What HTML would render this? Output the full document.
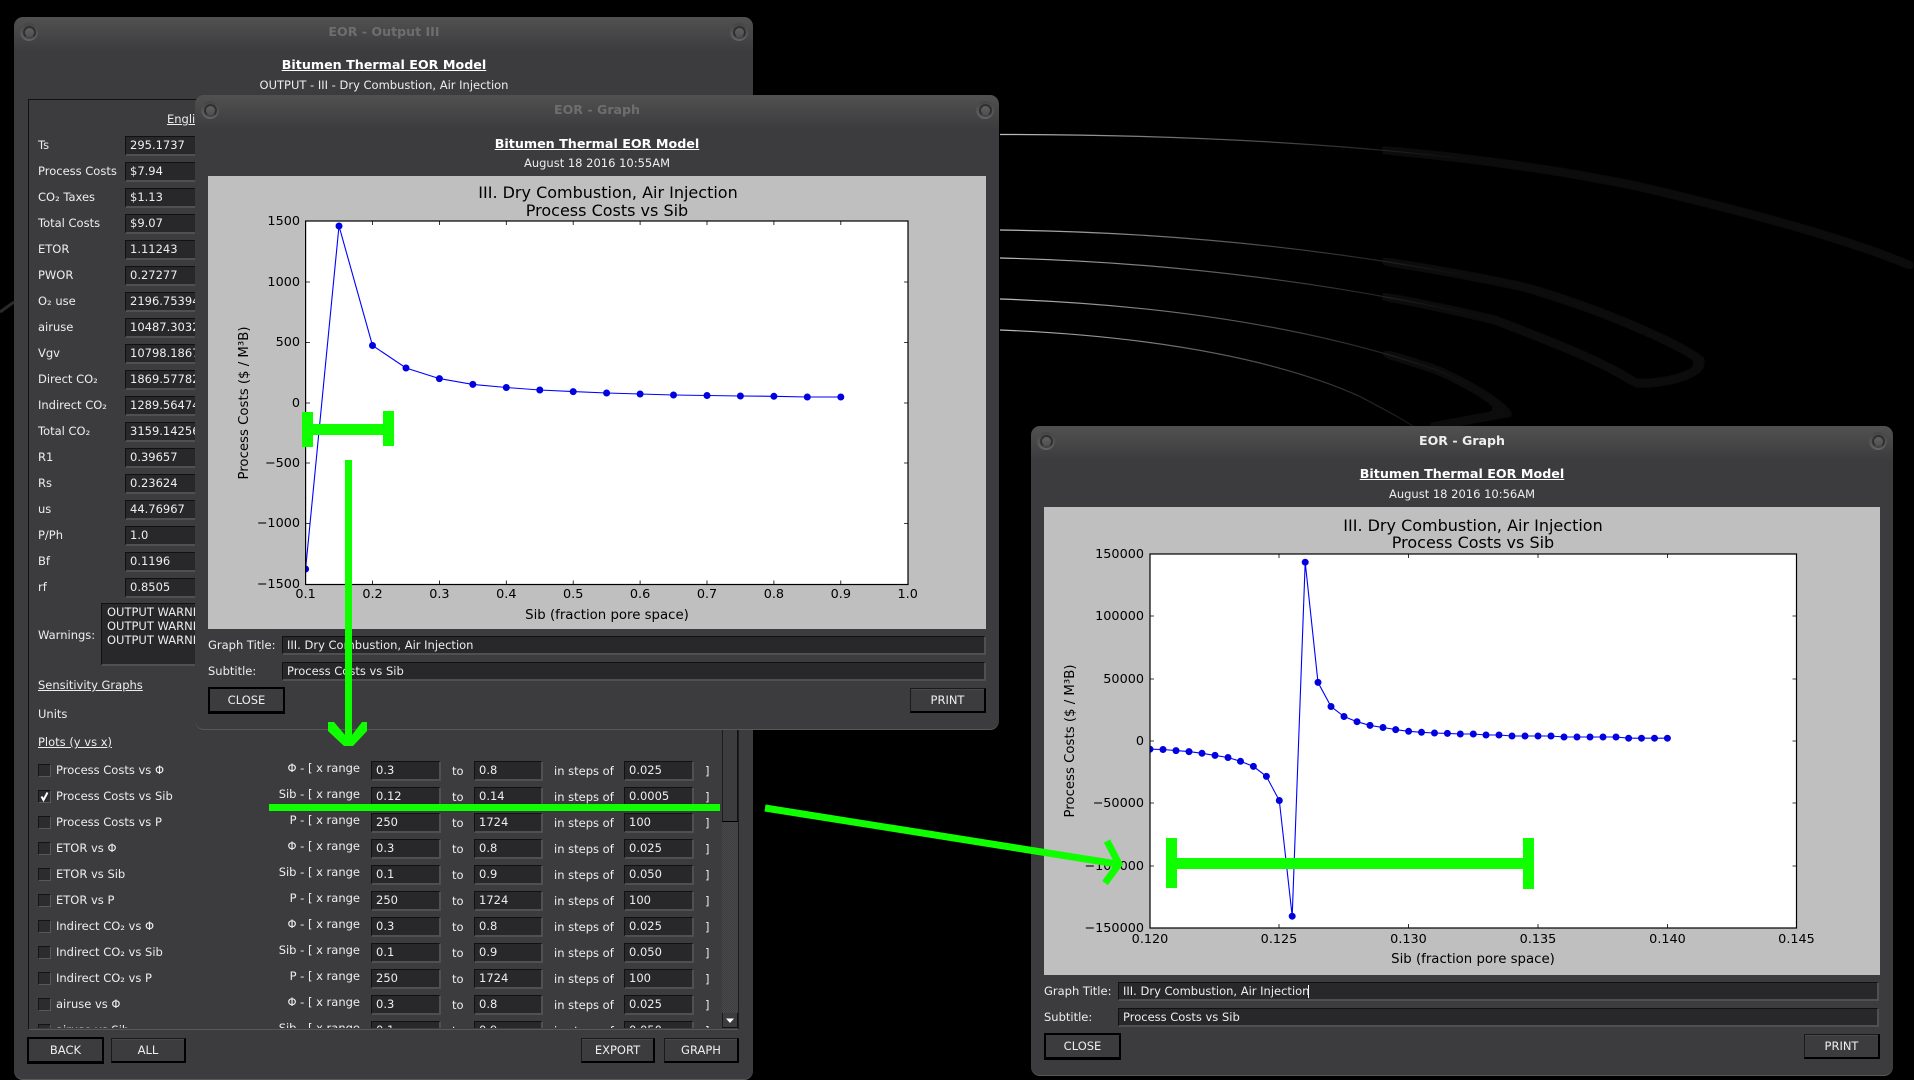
<!DOCTYPE html>
<html lang="en"><head><meta charset="utf-8"><title>EOR</title>
<style>
html,body{margin:0;padding:0;background:#000;width:1914px;height:1080px;overflow:hidden}
body{position:relative;font:11.5px/14px "DejaVu Sans","Liberation Sans",sans-serif;color:#eee}
div,span,svg{position:absolute}
svg{left:0;top:0}
.t{white-space:nowrap}
.w{box-sizing:border-box;background:linear-gradient(#515152 0,#3c3c3e 34px);border-radius:9px;border-bottom:1px solid #58585a}
.c{white-space:nowrap;text-align:center}
.h{font-weight:bold;font-size:12.6px;color:#6e6e6e}
.b{font-weight:bold;font-size:12.7px;text-decoration:underline;color:#fff}
.u{text-decoration:underline}
.k{width:18px;height:18px;border-radius:50%;background:linear-gradient(#444445,#626264)}
.k:after{content:"";position:absolute;left:2.5px;top:2.5px;width:9px;height:9px;border:2px solid #303031;border-bottom-color:#444445;border-radius:50%;background:linear-gradient(#606061,#505052)}
.i{box-sizing:border-box;height:20px;background:#28282a;border:1px solid #111;border-right:2px solid #505052;border-bottom:2px solid #505052;padding-left:4px;line-height:17px;overflow:hidden;white-space:nowrap}
.btn{box-sizing:border-box;text-align:center;background:#3c3c3e;border:1px solid #1a1a1a;border-right:2px solid #000;border-bottom:2px solid #000;box-shadow:inset 0 1px #48484a;line-height:22px;height:25px}
.d{border:2px solid #000;border-bottom:3px solid #000;line-height:22px;height:27px;box-shadow:none}
.x{box-sizing:border-box;width:13px;height:13px;left:38px;background:#2c2c2e;border:1px solid #141414;border-right:1px solid #58585a;border-bottom:1px solid #58585a}
.r{left:210px;width:150px;text-align:right;white-space:nowrap}
svg text{font-family:"DejaVu Sans","Liberation Sans",sans-serif;font-size:12.8px;fill:#000}
svg text.ft{font-size:16px;text-anchor:middle}
svg text.l{font-size:13.3px;text-anchor:middle}
.e{text-anchor:end}.m{text-anchor:middle}
</style></head><body>

<svg width="1914" height="1080" viewBox="0 0 1914 1080" fill="none">
<defs>
<linearGradient id="g1" gradientUnits="userSpaceOnUse" x1="1000" y1="0" x2="1480" y2="0"><stop offset="0" stop-color="#c0c0c0"/><stop offset=".4" stop-color="#666"/><stop offset=".8" stop-color="#222"/><stop offset="1" stop-color="#181818" stop-opacity="0"/></linearGradient>
<linearGradient id="g2" gradientUnits="userSpaceOnUse" x1="1250" y1="0" x2="1900" y2="0"><stop offset="0" stop-color="#000"/><stop offset=".5" stop-color="#101010"/><stop offset="1" stop-color="#080808"/></linearGradient>
<filter id="bl" filterUnits="userSpaceOnUse" x="900" y="60" width="1014" height="420"><feGaussianBlur stdDeviation="4"/></filter>
<filter id="bb" x="-50%" y="-100%" width="200%" height="300%"><feGaussianBlur stdDeviation="22"/></filter>
</defs>
<g filter="url(#bb)"><ellipse cx="890" cy="745" rx="140" ry="12" fill="#0b0b0b"/><ellipse cx="890" cy="880" rx="140" ry="40" fill="#050505"/></g>
<g filter="url(#bl)" stroke="url(#g2)" stroke-width="9">
<path d="M1000 134C1233 134 1466 150 1641 187 1760 215 1850 240 1914 267"/>
<path d="M1000 230C1175 232 1350 250 1524 287 1610 312 1680 345 1700 360 1705 375 1660 385 1635 383"/>
<path d="M1000 258C1175 262 1350 285 1495 320 1560 345 1610 365 1635 383"/>
<path d="M1000 299C1175 305 1320 330 1437 370 1470 385 1495 400 1507 413L1430 427"/>
</g>
<g stroke="url(#g1)" stroke-width="1.2">
<path d="M1000 134.500C1233 134.500 1466 150 1641 187"/>
<path d="M1000 230C1175 232 1350 250 1524 287"/>
<path d="M1000 258C1175 262 1350 285 1495 320"/>
<path d="M1000 299C1175 305 1320 330 1437 370 1470 385 1495 400 1507 413"/>
<path d="M1000 330C1175 337 1291 365 1361 397 1385 410 1405 420 1414 427"/>
</g>
<path d="M0 312L14 302" stroke="#2a2a2a" stroke-width="3"/>
</svg>

<!-- WINDOW 1 -->
<div class="w" style="left:14px;top:17px;width:739px;height:1063px"></div>
<div class="k" style="left:20px;top:23px"></div>
<div class="k" style="left:730px;top:23px"></div>
<div class="c h" style="left:184px;width:400px;top:25px">EOR - Output III</div>
<div class="c b" style="left:184px;width:400px;top:58px">Bitumen Thermal EOR Model</div>
<div class="c" style="left:184px;width:400px;top:78px">OUTPUT - III - Dry Combustion, Air Injection</div>
<div style="left:28px;top:99px;width:711px;height:931px;box-sizing:border-box;border:1px solid #111;border-bottom:1px solid #58585a;border-right:1px solid #1c1c1c"></div>
<div class="t u" style="left:167px;top:112px">English</div>

<div class="t" style="left:38px;top:138px">Ts</div><div class="i" style="left:125px;top:136px;width:120px">295.1737</div>
<div class="t" style="left:38px;top:164px">Process Costs</div><div class="i" style="left:125px;top:162px;width:120px">$7.94</div>
<div class="t" style="left:38px;top:190px">CO₂ Taxes</div><div class="i" style="left:125px;top:188px;width:120px">$1.13</div>
<div class="t" style="left:38px;top:216px">Total Costs</div><div class="i" style="left:125px;top:214px;width:120px">$9.07</div>
<div class="t" style="left:38px;top:242px">ETOR</div><div class="i" style="left:125px;top:240px;width:120px">1.11243</div>
<div class="t" style="left:38px;top:268px">PWOR</div><div class="i" style="left:125px;top:266px;width:120px">0.27277</div>
<div class="t" style="left:38px;top:294px">O₂ use</div><div class="i" style="left:125px;top:292px;width:120px">2196.75394</div>
<div class="t" style="left:38px;top:320px">airuse</div><div class="i" style="left:125px;top:318px;width:120px">10487.30321</div>
<div class="t" style="left:38px;top:346px">Vgv</div><div class="i" style="left:125px;top:344px;width:120px">10798.18671</div>
<div class="t" style="left:38px;top:372px">Direct CO₂</div><div class="i" style="left:125px;top:370px;width:120px">1869.57782</div>
<div class="t" style="left:38px;top:398px">Indirect CO₂</div><div class="i" style="left:125px;top:396px;width:120px">1289.56474</div>
<div class="t" style="left:38px;top:424px">Total CO₂</div><div class="i" style="left:125px;top:422px;width:120px">3159.14256</div>
<div class="t" style="left:38px;top:450px">R1</div><div class="i" style="left:125px;top:448px;width:120px">0.39657</div>
<div class="t" style="left:38px;top:476px">Rs</div><div class="i" style="left:125px;top:474px;width:120px">0.23624</div>
<div class="t" style="left:38px;top:502px">us</div><div class="i" style="left:125px;top:500px;width:120px">44.76967</div>
<div class="t" style="left:38px;top:528px">P/Ph</div><div class="i" style="left:125px;top:526px;width:120px">1.0</div>
<div class="t" style="left:38px;top:554px">Bf</div><div class="i" style="left:125px;top:552px;width:120px">0.1196</div>
<div class="t" style="left:38px;top:580px">rf</div><div class="i" style="left:125px;top:578px;width:120px">0.8505</div>
<div class="t" style="left:38px;top:628px">Warnings:</div>
<div class="i" style="left:101px;top:603px;width:200px;height:63px;padding-left:5px;line-height:14px;padding-top:1px">OUTPUT WARNING<br>OUTPUT WARNING<br>OUTPUT WARNING</div>
<div class="t u" style="left:38px;top:678px">Sensitivity Graphs</div>
<div class="t" style="left:38px;top:707px">Units</div>
<div class="t u" style="left:38px;top:735px">Plots (y vs x)</div>

<div style="left:0;top:0;width:722px;height:1028px;overflow:hidden">
<div class="x" style="top:764px"></div><div class="t" style="left:56px;top:763px">Process Costs vs Φ</div><div class="r" style="top:761px">Φ - [ x range</div><div class="i" style="left:371px;top:761px;width:70px">0.3</div><div class="t" style="left:452px;top:764px">to</div><div class="i" style="left:474px;top:761px;width:69px">0.8</div><div class="t" style="left:554px;top:764px">in steps of</div><div class="i" style="left:624px;top:761px;width:70px">0.025</div><div class="t" style="left:705px;top:764px">]</div>
<div class="x" style="top:790px"><svg width="11" height="11" viewBox="0 0 11 11" fill="none" style="left:0;top:0"><path d="M2.500 5.500L4.500 9 8.500 1.500" stroke="#fff" stroke-width="2"/></svg></div><div class="t" style="left:56px;top:789px">Process Costs vs Sib</div><div class="r" style="top:787px">Sib - [ x range</div><div class="i" style="left:371px;top:787px;width:70px">0.12</div><div class="t" style="left:452px;top:790px">to</div><div class="i" style="left:474px;top:787px;width:69px">0.14</div><div class="t" style="left:554px;top:790px">in steps of</div><div class="i" style="left:624px;top:787px;width:70px">0.0005</div><div class="t" style="left:705px;top:790px">]</div>
<div class="x" style="top:816px"></div><div class="t" style="left:56px;top:815px">Process Costs vs P</div><div class="r" style="top:813px">P - [ x range</div><div class="i" style="left:371px;top:813px;width:70px">250</div><div class="t" style="left:452px;top:816px">to</div><div class="i" style="left:474px;top:813px;width:69px">1724</div><div class="t" style="left:554px;top:816px">in steps of</div><div class="i" style="left:624px;top:813px;width:70px">100</div><div class="t" style="left:705px;top:816px">]</div>
<div class="x" style="top:842px"></div><div class="t" style="left:56px;top:841px">ETOR vs Φ</div><div class="r" style="top:839px">Φ - [ x range</div><div class="i" style="left:371px;top:839px;width:70px">0.3</div><div class="t" style="left:452px;top:842px">to</div><div class="i" style="left:474px;top:839px;width:69px">0.8</div><div class="t" style="left:554px;top:842px">in steps of</div><div class="i" style="left:624px;top:839px;width:70px">0.025</div><div class="t" style="left:705px;top:842px">]</div>
<div class="x" style="top:868px"></div><div class="t" style="left:56px;top:867px">ETOR vs Sib</div><div class="r" style="top:865px">Sib - [ x range</div><div class="i" style="left:371px;top:865px;width:70px">0.1</div><div class="t" style="left:452px;top:868px">to</div><div class="i" style="left:474px;top:865px;width:69px">0.9</div><div class="t" style="left:554px;top:868px">in steps of</div><div class="i" style="left:624px;top:865px;width:70px">0.050</div><div class="t" style="left:705px;top:868px">]</div>
<div class="x" style="top:894px"></div><div class="t" style="left:56px;top:893px">ETOR vs P</div><div class="r" style="top:891px">P - [ x range</div><div class="i" style="left:371px;top:891px;width:70px">250</div><div class="t" style="left:452px;top:894px">to</div><div class="i" style="left:474px;top:891px;width:69px">1724</div><div class="t" style="left:554px;top:894px">in steps of</div><div class="i" style="left:624px;top:891px;width:70px">100</div><div class="t" style="left:705px;top:894px">]</div>
<div class="x" style="top:920px"></div><div class="t" style="left:56px;top:919px">Indirect CO₂ vs Φ</div><div class="r" style="top:917px">Φ - [ x range</div><div class="i" style="left:371px;top:917px;width:70px">0.3</div><div class="t" style="left:452px;top:920px">to</div><div class="i" style="left:474px;top:917px;width:69px">0.8</div><div class="t" style="left:554px;top:920px">in steps of</div><div class="i" style="left:624px;top:917px;width:70px">0.025</div><div class="t" style="left:705px;top:920px">]</div>
<div class="x" style="top:946px"></div><div class="t" style="left:56px;top:945px">Indirect CO₂ vs Sib</div><div class="r" style="top:943px">Sib - [ x range</div><div class="i" style="left:371px;top:943px;width:70px">0.1</div><div class="t" style="left:452px;top:946px">to</div><div class="i" style="left:474px;top:943px;width:69px">0.9</div><div class="t" style="left:554px;top:946px">in steps of</div><div class="i" style="left:624px;top:943px;width:70px">0.050</div><div class="t" style="left:705px;top:946px">]</div>
<div class="x" style="top:972px"></div><div class="t" style="left:56px;top:971px">Indirect CO₂ vs P</div><div class="r" style="top:969px">P - [ x range</div><div class="i" style="left:371px;top:969px;width:70px">250</div><div class="t" style="left:452px;top:972px">to</div><div class="i" style="left:474px;top:969px;width:69px">1724</div><div class="t" style="left:554px;top:972px">in steps of</div><div class="i" style="left:624px;top:969px;width:70px">100</div><div class="t" style="left:705px;top:972px">]</div>
<div class="x" style="top:998px"></div><div class="t" style="left:56px;top:997px">airuse vs Φ</div><div class="r" style="top:995px">Φ - [ x range</div><div class="i" style="left:371px;top:995px;width:70px">0.3</div><div class="t" style="left:452px;top:998px">to</div><div class="i" style="left:474px;top:995px;width:69px">0.8</div><div class="t" style="left:554px;top:998px">in steps of</div><div class="i" style="left:624px;top:995px;width:70px">0.025</div><div class="t" style="left:705px;top:998px">]</div>
<div class="x" style="top:1024px"></div><div class="t" style="left:56px;top:1023px">airuse vs Sib</div><div class="r" style="top:1021px">Sib - [ x range</div><div class="i" style="left:371px;top:1021px;width:70px">0.1</div><div class="t" style="left:452px;top:1024px">to</div><div class="i" style="left:474px;top:1021px;width:69px">0.9</div><div class="t" style="left:554px;top:1024px">in steps of</div><div class="i" style="left:624px;top:1021px;width:70px">0.050</div><div class="t" style="left:705px;top:1024px">]</div>
</div>

<!-- scrollbar -->
<div style="left:722px;top:700px;width:16px;height:122px;box-sizing:border-box;background:#3c3c3e;border-left:1px solid #1c1c1c;border-right:1px solid #111;border-bottom:1px solid #000"></div>
<div style="left:722px;top:822px;width:16px;height:191px;background:repeating-conic-gradient(#4a4a4c 0 25%,#3c3c3e 0 50%) 0 0/2px 2px"></div>
<div style="left:722px;top:1013px;width:16px;height:15px;box-sizing:border-box;background:#3c3c3e;border-left:1px solid #1c1c1c;border-right:1px solid #111;border-bottom:1px solid #111"></div>
<svg width="1914" height="1080" viewBox="0 0 1914 1080"><path d="M726 1018.500h8l-4 4.500z" fill="#fff"/></svg>

<div class="btn d" style="left:27px;top:1037px;width:77px">BACK</div>
<div class="btn" style="left:111px;top:1038px;width:75px">ALL</div>
<div class="btn" style="left:581px;top:1038px;width:74px">EXPORT</div>
<div class="btn" style="left:664px;top:1038px;width:75px">GRAPH</div>

<!-- WINDOW 2 -->
<div class="w" style="left:195px;top:95px;width:804px;height:635px"></div>
<div class="k" style="left:201px;top:101px"></div>
<div class="k" style="left:976px;top:101px"></div>
<div class="c h" style="left:397px;width:400px;top:103px">EOR - Graph</div>
<div class="c b" style="left:397px;width:400px;top:137px">Bitumen Thermal EOR Model</div>
<div class="c" style="left:397px;width:400px;top:156px">August 18 2016 10:55AM</div>
<div style="left:208px;top:176px;width:778px;height:453px;background:#bfbfbf"></div>
<svg width="1914" height="1080" viewBox="0 0 1914 1080" fill="none">
<defs><clipPath id="c2"><rect x="305.600" y="221" width="602.400" height="363.500"/></clipPath></defs>
<rect x="305.600" y="221" width="602.400" height="363.500" fill="#fff"/>
<g clip-path="url(#c2)">
<path d="M305.600 569L339 226 372.500 345.500 406 368 439.400 378.600 472.800 384.400 506.300 387.500 539.800 390 573.200 391.600 606.600 393 640.100 394 673.500 395 707 395.500 740.400 396 773.900 396.300 807.300 397 840.800 397" stroke="#0000ff" stroke-width="1.100"/>
<path d="M305.600 569h0M339 226h0M372.500 345.500h0M406 368h0M439.400 378.600h0M472.800 384.400h0M506.300 387.500h0M539.800 390h0M573.200 391.600h0M606.600 393h0M640.100 394h0M673.500 395h0M707 395.500h0M740.400 396h0M773.900 396.300h0M807.300 397h0M840.800 397h0" stroke="#0000e0" stroke-width="7" stroke-linecap="round"/>
</g>
<path d="M372.500 221v4M439.400 221v4M506.300 221v4M573.200 221v4M640.100 221v4M707 221v4M773.900 221v4M840.800 221v4M372.500 584.500v-4M439.400 584.500v-4M506.300 584.500v-4M573.200 584.500v-4M640.100 584.500v-4M707 584.500v-4M773.900 584.500v-4M840.800 584.500v-4M306 282h4M306 342.500h4M306 403h4M306 463h4M306 523.500h4M908 282h-4M908 342.500h-4M908 403h-4M908 463h-4M908 523.500h-4" stroke="#000" stroke-width=".8"/>
<rect x="305.600" y="221" width="602.400" height="363.500" stroke="#000" stroke-width="1.200"/>
<text class="ft" x="608" y="198">III. Dry Combustion, Air Injection</text>
<text class="ft" x="607" y="216">Process Costs vs Sib</text>
<text class="e" x="300" y="225">1500</text><text class="e" x="300" y="286">1000</text><text class="e" x="300" y="346">500</text><text class="e" x="300" y="407">0</text><text class="e" x="300" y="467">−500</text><text class="e" x="300" y="527">−1000</text><text class="e" x="300" y="588">−1500</text>
<text class="m" x="305.600" y="598">0.1</text><text class="m" x="372.500" y="598">0.2</text><text class="m" x="439.400" y="598">0.3</text><text class="m" x="506.300" y="598">0.4</text><text class="m" x="573.200" y="598">0.5</text><text class="m" x="640.100" y="598">0.6</text><text class="m" x="707" y="598">0.7</text><text class="m" x="773.900" y="598">0.8</text><text class="m" x="840.800" y="598">0.9</text><text class="m" x="907.700" y="598">1.0</text>
<text class="l" x="607" y="619">Sib (fraction pore space)</text>
<text class="l" transform="translate(248 403) rotate(-90)">Process Costs ($ / M³B)</text>
</svg>
<div class="t" style="left:208px;top:638px">Graph Title:</div><div class="i" style="left:282px;top:636px;width:704px;height:19px">III. Dry Combustion, Air Injection</div>
<div class="t" style="left:208px;top:664px">Subtitle:</div><div class="i" style="left:282px;top:662px;width:704px;height:19px">Process Costs vs Sib</div>
<div class="btn d" style="left:208px;top:687px;width:77px">CLOSE</div>
<div class="btn" style="left:910px;top:688px;width:76px">PRINT</div>

<!-- WINDOW 3 -->
<div class="w" style="left:1031px;top:426px;width:862px;height:650px"></div>
<div class="k" style="left:1037px;top:432px"></div>
<div class="k" style="left:1869px;top:432px"></div>
<div class="c h" style="left:1262px;width:400px;top:434px;color:#eee">EOR - Graph</div>
<div class="c b" style="left:1262px;width:400px;top:467px">Bitumen Thermal EOR Model</div>
<div class="c" style="left:1262px;width:400px;top:487px">August 18 2016 10:56AM</div>
<div style="left:1044px;top:507px;width:836px;height:468px;background:#bfbfbf"></div>
<svg width="1914" height="1080" viewBox="0 0 1914 1080" fill="none">
<defs><clipPath id="c3"><rect x="1150" y="554" width="646.500" height="374"/></clipPath></defs>
<rect x="1150" y="554" width="646.500" height="374" fill="#fff"/>
<g clip-path="url(#c3)">
<path d="M1150 749.200L1163 749.500 1176 750.600 1189 751.600 1202 753.300 1215 755.400 1228 757.500 1240.500 761.300 1253.400 766.400 1266.400 776.400 1279.300 800.500 1292.200 916.200 1305.200 562.200 1318 682.400 1331 706.500 1344 716.500 1357 721.700 1370 725.400 1383 727.500 1395.700 729.600 1408.600 731.300 1421.500 732.300 1434.500 733 1447.400 733.400 1460.300 734 1473.300 734 1486 735 1499 735 1512 736 1525 736 1538 736 1551 736 1564 737 1577 737 1590 737 1603 737 1616 737 1628.600 738.200 1641.500 738.200 1654.500 738.200 1667.400 738.200" stroke="#0000ff" stroke-width="1.100"/>
<path d="M1150 749.200h0M1163 749.500h0M1176 750.600h0M1189 751.600h0M1202 753.300h0M1215 755.400h0M1228 757.500h0M1240.500 761.300h0M1253.400 766.400h0M1266.400 776.400h0M1279.300 800.500h0M1292.200 916.200h0M1305.200 562.200h0M1318 682.400h0M1331 706.500h0M1344 716.500h0M1357 721.700h0M1370 725.400h0M1383 727.500h0M1395.700 729.600h0M1408.600 731.300h0M1421.500 732.300h0M1434.500 733h0M1447.400 733.400h0M1460.300 734h0M1473.300 734h0M1486 735h0M1499 735h0M1512 736h0M1525 736h0M1538 736h0M1551 736h0M1564 737h0M1577 737h0M1590 737h0M1603 737h0M1616 737h0M1628.600 738.200h0M1641.500 738.200h0M1654.500 738.200h0M1667.400 738.200h0" stroke="#0000e0" stroke-width="7" stroke-linecap="round"/>
</g>
<path d="M1279 554v4M1408.500 554v4M1538 554v4M1667.500 554v4M1279 928v-4M1408.500 928v-4M1538 928v-4M1667.500 928v-4M1150 616h4M1150 679h4M1150 741h4M1150 803h4M1150 866h4M1796.500 616h-4M1796.500 679h-4M1796.500 741h-4M1796.500 803h-4M1796.500 866h-4" stroke="#000" stroke-width=".8"/>
<rect x="1150" y="554" width="646.500" height="374" stroke="#000" stroke-width="1.200"/>
<text class="ft" x="1473" y="531">III. Dry Combustion, Air Injection</text>
<text class="ft" x="1473" y="548">Process Costs vs Sib</text>
<text class="e" x="1144" y="558">150000</text><text class="e" x="1144" y="620">100000</text><text class="e" x="1144" y="683">50000</text><text class="e" x="1144" y="745">0</text><text class="e" x="1144" y="807">−50000</text><text class="e" x="1144" y="870">−100000</text><text class="e" x="1144" y="932">−150000</text>
<text class="m" x="1150" y="943">0.120</text><text class="m" x="1279" y="943">0.125</text><text class="m" x="1408.500" y="943">0.130</text><text class="m" x="1538" y="943">0.135</text><text class="m" x="1667.500" y="943">0.140</text><text class="m" x="1796.500" y="943">0.145</text>
<text class="l" x="1473" y="963">Sib (fraction pore space)</text>
<text class="l" transform="translate(1074 741) rotate(-90)">Process Costs ($ / M³B)</text>
</svg>
<div class="t" style="left:1044px;top:984px">Graph Title:</div><div class="i" style="left:1118px;top:982px;width:761px;height:19px">III. Dry Combustion, Air Injection</div>
<div style="left:1308px;top:985px;width:1px;height:13px;background:#fff"></div>
<div class="t" style="left:1044px;top:1010px">Subtitle:</div><div class="i" style="left:1118px;top:1008px;width:761px;height:19px">Process Costs vs Sib</div>
<div class="btn d" style="left:1044px;top:1033px;width:77px">CLOSE</div>
<div class="btn" style="left:1804px;top:1034px;width:76px">PRINT</div>

<!-- GREEN ANNOTATIONS -->
<svg width="1914" height="1080" viewBox="0 0 1914 1080">
<g fill="#10ff00">
<rect x="302" y="412" width="11" height="35"/><rect x="383" y="411" width="11" height="35"/><rect x="313" y="424" width="70" height="11"/>
<rect x="345" y="460" width="7" height="276"/>
<path d="M328 722h6l11 13h7l10-13h5v9l-14 15h-9l-16-15z"/>
<rect x="269" y="804" width="451" height="7"/>
<rect x="1166" y="838" width="11" height="50"/><rect x="1523" y="838" width="11" height="51"/><rect x="1177" y="858" width="346" height="11"/>
</g>
<path d="M765 808L1117 864" stroke="#10ff00" stroke-width="7" fill="none"/>
<path d="M1107 841L1119 864 1105 883" stroke="#10ff00" stroke-width="7" fill="none"/>
</svg>
</body></html>
